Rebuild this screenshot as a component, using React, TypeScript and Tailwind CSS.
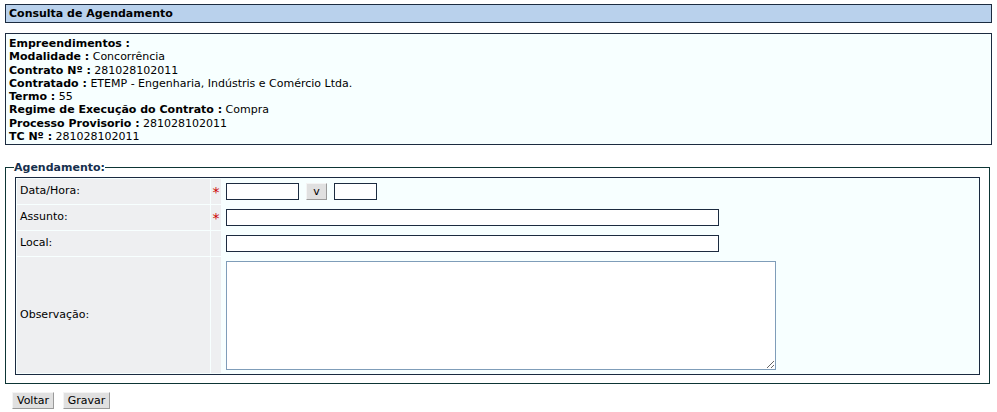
import React from 'react'

const font = { fontFamily: 'Verdana, "DejaVu Sans", sans-serif' }

type Info = { label: string; value?: string }

const infos: Info[] = [
  { label: 'Empreendimentos :' },
  { label: 'Modalidade :', value: 'Concorrência' },
  { label: 'Contrato Nº :', value: '281028102011' },
  { label: 'Contratado :', value: 'ETEMP - Engenharia, Indústris e Comércio Ltda.' },
  { label: 'Termo :', value: '55' },
  { label: 'Regime de Execução do Contrato :', value: 'Compra' },
  { label: 'Processo Provisorio :', value: '281028102011' },
  { label: 'TC Nº :', value: '281028102011' },
]

const Star = () => <span className="text-[#cc0000] text-[14px] leading-none relative top-[2px]">*</span>

const btn =
  'h-[17px] bg-[#e0e0e0] border border-t-[#f4f4f4] border-l-[#f4f4f4] border-r-[#9a9a9a] border-b-[#9a9a9a] text-[11px] font-normal leading-[13px]'

const App: React.FC = () => {
  return (
    <div className="w-[997px] h-[412px] bg-white text-black text-[11px] px-[5px] pt-[4px]" style={font}>
      <div className="h-[19px] bg-[#b9d1ec] border border-[#1c2b40] pl-[3px] font-bold leading-[17px]">
        Consulta de Agendamento
      </div>

      <div className="mt-[10px] h-[112px] bg-[#f7ffff] border border-[#1c2b40] pl-[3px] pt-[3px] leading-[13.3px]">
        {infos.map((i) => (
          <div key={i.label} className="whitespace-nowrap">
            <span className="font-bold">{i.label}</span>
            {i.value ? ' ' + i.value : ''}
          </div>
        ))}
      </div>

      <fieldset className="mt-[16px] mr-[2px] border border-[#0d3535] px-[9px] pt-[3px] pb-[8px]">
        <legend className="ml-[-1px] font-bold text-[#162f4d] leading-[13px]">Agendamento:</legend>
        <table className="w-full border border-[#1a2a40] bg-[#f7ffff] border-separate border-spacing-[1px]">
          <tbody>
            <tr>
              <td className="w-[193px] h-[25px] bg-[#eeeff1] pl-[3px] align-middle">Data/Hora:</td>
              <td className="w-[10px] bg-[#eeeff1] text-center align-middle">
                <Star />
              </td>
              <td className="pl-[4px] align-middle">
                <div className="flex items-center gap-[7px]">
                  <input className="w-[73px] h-[17px] bg-white border border-[#1c2b40] outline-none" />
                  <button className={btn + ' w-[21px]'} style={font}>
                    v
                  </button>
                  <input className="w-[43px] h-[17px] bg-white border border-[#1c2b40] outline-none" />
                </div>
              </td>
            </tr>
            <tr>
              <td className="h-[25px] bg-[#eeeff1] pl-[3px] align-middle">Assunto:</td>
              <td className="bg-[#eeeff1] text-center align-middle">
                <Star />
              </td>
              <td className="pl-[4px] align-middle">
                <input className="block w-[493px] h-[17px] bg-white border border-[#1c2b40] outline-none" />
              </td>
            </tr>
            <tr>
              <td className="h-[25px] bg-[#eeeff1] pl-[3px] align-middle">Local:</td>
              <td className="bg-[#eeeff1]"></td>
              <td className="pl-[4px] align-middle">
                <input className="block w-[493px] h-[17px] bg-white border border-[#1c2b40] outline-none" />
              </td>
            </tr>
            <tr>
              <td className="h-[116px] bg-[#eeeff1] pl-[3px] align-middle">Observação:</td>
              <td className="bg-[#eeeff1]"></td>
              <td className="pl-[4px] align-middle">
                <textarea className="block w-[550px] h-[109px] bg-white border border-[#7f9db9] outline-none" />
              </td>
            </tr>
          </tbody>
        </table>
      </fieldset>

      <div className="flex gap-[9px] ml-[7px] mt-[8px]">
        <button className={btn + ' w-[42px]'} style={font}>
          Voltar
        </button>
        <button className={btn + ' w-[47px]'} style={font}>
          Gravar
        </button>
      </div>
    </div>
  )
}

export default App
